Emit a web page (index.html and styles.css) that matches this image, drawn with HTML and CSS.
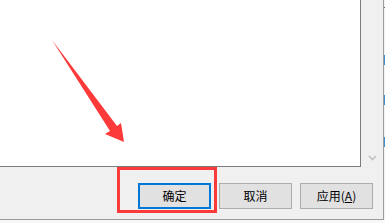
FILE: index.html
```html
<!DOCTYPE html>
<html lang="zh-CN">
<head>
    <meta charset="UTF-8">
    <title>确定</title>
    <link rel="stylesheet" href="styles.css">
</head>
<body>

<div class="screen">
    <div class="dialog">
        <div class="content">
            <div class="panel"></div>
            <div class="scroll">
                <svg class="chevron" width="9" height="6" viewBox="0 0 9 6">
                    <polyline points="1,1 4.5,4.5 8,1" fill="none" stroke="#c2c2c2" stroke-width="1.6"/>
                </svg>
            </div>
        </div>
        <div class="buttons">
            <button class="btn default">确定</button>
            <button class="btn">取消</button>
            <button class="btn">应用(<u>A</u>)</button>
        </div>
    </div>
    <div class="behind">
        <span class="mark line" style="top: 7px"></span>
        <span class="mark blue" style="top: 55px"></span>
        <span class="mark blue" style="top: 95px"></span>
        <span class="mark blue" style="top: 137px"></span>
    </div>

    <!-- annotation -->
    <div class="highlight"></div>
    <svg class="arrow" width="385" height="223" viewBox="0 0 385 223">
        <polygon points="52,40 117,126 121,123 124,142 105,134 110,131" fill="#fd3a3a"/>
    </svg>
</div>

</body>
</html>
```

FILE: styles.css
```css
body {
    margin: 0;
    background: #f7f7f7;
    font-family: "Noto Sans CJK SC", "Noto Sans", sans-serif;
    overflow: hidden;
}

.screen {
    position: relative;
    width: 385px;
    height: 223px;
    display: flex;
}

.dialog {
    width: 383px;
    height: 219px;
    background: #f0f0f0;
    border-right: 1px solid #9c9c9c;
    border-bottom: 1px solid #9c9c9c;
    display: flex;
    flex-direction: column;
}

.content {
    display: flex;
    height: 167px;
}

.panel {
    width: 360px;
    height: 166px;
    background: #ffffff;
    border-right: 1px solid #7c7c7c;
    border-bottom: 1px solid #7c7c7c;
}

.scroll {
    flex: 1;
    display: flex;
    justify-content: center;
    align-items: flex-end;
    padding-bottom: 6px;
}

.chevron {
    display: block;
    margin-left: 1px;
}

.buttons {
    display: flex;
    justify-content: flex-end;
    gap: 8px;
    padding: 16px 10px 0 0;
}

.btn {
    box-sizing: border-box;
    width: 73px;
    height: 26px;
    margin: 0;
    padding: 0;
    background: #e1e1e1;
    border: 1px solid #adadad;
    font-family: "Noto Sans CJK SC", "Noto Sans", sans-serif;
    font-size: 12px;
    color: #000000;
    line-height: 24px;
}

.btn.default {
    border: 2px solid #0078d7;
    line-height: 22px;
}

.behind {
    position: relative;
    width: 1px;
    height: 219px;
    background: #f2f2f2;
}

.mark {
    position: absolute;
    left: 0;
    width: 2px;
}

.mark.line {
    height: 1px;
    background: #6a6a6a;
}

.mark.blue {
    height: 10px;
    background: #3d8fcf;
}

.highlight {
    position: absolute;
    left: 117px;
    top: 167px;
    width: 100px;
    height: 46px;
    box-sizing: border-box;
    border: 3px solid #fb3b3b;
}

.arrow {
    position: absolute;
    left: 0;
    top: 0;
}
```
